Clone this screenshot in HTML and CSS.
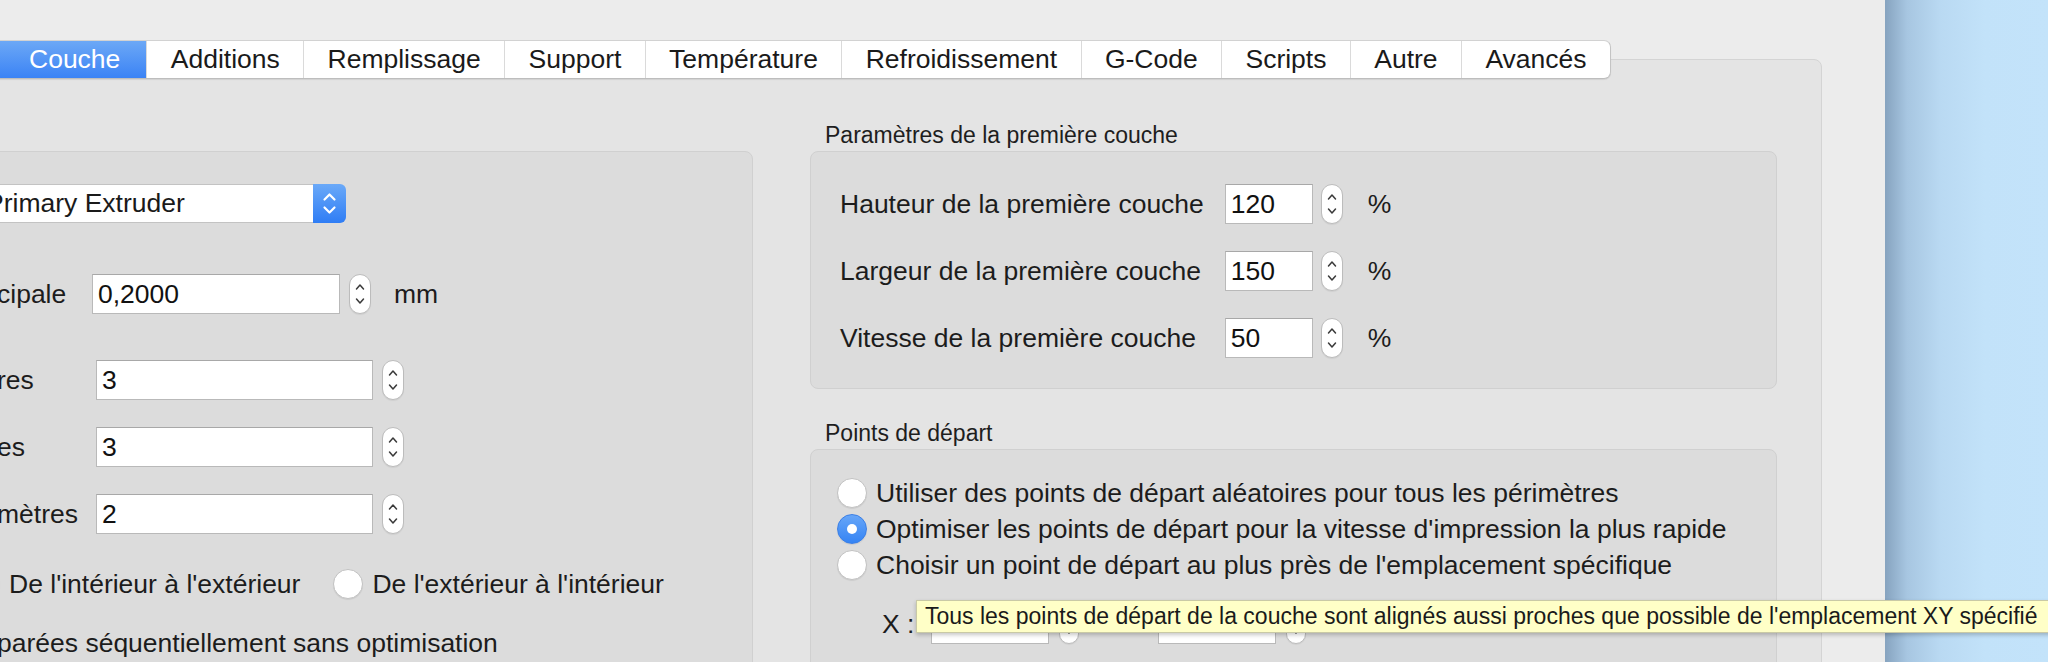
FILE: index.html
```html
<!DOCTYPE html>
<html lang="fr">
<head>
<meta charset="utf-8">
<title>Couche</title>
<link rel="stylesheet" href="styles.css">
</head>
<body>
<div class="screen">
  <div class="window">
    <nav class="tabs">
      <div class="tab active">Couche</div>
      <div class="tab">Additions</div>
      <div class="tab">Remplissage</div>
      <div class="tab">Support</div>
      <div class="tab">Température</div>
      <div class="tab">Refroidissement</div>
      <div class="tab">G-Code</div>
      <div class="tab">Scripts</div>
      <div class="tab">Autre</div>
      <div class="tab">Avancés</div>
    </nav>
    <div class="tabbox">
      <div class="col-left">
        <div class="groupbox groupbox--left">
          <div class="popup">
            <span class="popup-label">Primary Extruder</span>
            <span class="popup-arrows">
              <svg width="33" height="39" viewBox="0 0 33 39"><path d="M11.5 15.5 L16.5 10.5 L21.5 15.5 M11.5 23.5 L16.5 28.5 L21.5 23.5" fill="none" stroke="#fff" stroke-width="2.2" stroke-linecap="round" stroke-linejoin="round"/></svg>
            </span>
          </div>
          <div class="row-first">
            <span class="label label--first">cipale</span>
            <span class="input input--wide">0,2000</span>
            <span class="stepper"><svg width="20" height="38" viewBox="0 0 20 38"><path d="M6.5 14 L10 10 L13.5 14 M6.5 24 L10 28 L13.5 24" fill="none" stroke="#3a3a3a" stroke-width="1.5" stroke-linecap="round" stroke-linejoin="round"/></svg></span>
            <span class="unit unit--mm">mm</span>
          </div>
          <div class="fields">
            <span class="label">res</span>
            <span class="input input--long">3</span>
            <span class="stepper"><svg width="20" height="38" viewBox="0 0 20 38"><path d="M6.5 14 L10 10 L13.5 14 M6.5 24 L10 28 L13.5 24" fill="none" stroke="#3a3a3a" stroke-width="1.5" stroke-linecap="round" stroke-linejoin="round"/></svg></span>
            <span class="label">es</span>
            <span class="input input--long">3</span>
            <span class="stepper"><svg width="20" height="38" viewBox="0 0 20 38"><path d="M6.5 14 L10 10 L13.5 14 M6.5 24 L10 28 L13.5 24" fill="none" stroke="#3a3a3a" stroke-width="1.5" stroke-linecap="round" stroke-linejoin="round"/></svg></span>
            <span class="label">mètres</span>
            <span class="input input--long">2</span>
            <span class="stepper"><svg width="20" height="38" viewBox="0 0 20 38"><path d="M6.5 14 L10 10 L13.5 14 M6.5 24 L10 28 L13.5 24" fill="none" stroke="#3a3a3a" stroke-width="1.5" stroke-linecap="round" stroke-linejoin="round"/></svg></span>
          </div>
          <div class="radio-row">
            <span class="radio radio--hidden"></span>
            <span class="radio-text">De l'intérieur à l'extérieur</span>
            <span class="radio radio--spaced"></span>
            <span class="radio-text">De l'extérieur à l'intérieur</span>
          </div>
          <div class="check-row">parées séquentiellement sans optimisation</div>
        </div>
      </div>
      <div class="col-right">
        <div class="group-title">Paramètres de la première couche</div>
        <div class="groupbox groupbox--params">
          <div class="param-grid">
            <span class="param-label">Hauteur de la première couche</span>
            <span class="input input--short">120</span>
            <span class="stepper stepper--param"><svg width="20" height="38" viewBox="0 0 20 38"><path d="M6.5 14 L10 10 L13.5 14 M6.5 24 L10 28 L13.5 24" fill="none" stroke="#3a3a3a" stroke-width="1.5" stroke-linecap="round" stroke-linejoin="round"/></svg></span>
            <span class="unit unit--pct">%</span>
            <span class="param-label">Largeur de la première couche</span>
            <span class="input input--short">150</span>
            <span class="stepper stepper--param"><svg width="20" height="38" viewBox="0 0 20 38"><path d="M6.5 14 L10 10 L13.5 14 M6.5 24 L10 28 L13.5 24" fill="none" stroke="#3a3a3a" stroke-width="1.5" stroke-linecap="round" stroke-linejoin="round"/></svg></span>
            <span class="unit unit--pct">%</span>
            <span class="param-label">Vitesse de la première couche</span>
            <span class="input input--short">50</span>
            <span class="stepper stepper--param"><svg width="20" height="38" viewBox="0 0 20 38"><path d="M6.5 14 L10 10 L13.5 14 M6.5 24 L10 28 L13.5 24" fill="none" stroke="#3a3a3a" stroke-width="1.5" stroke-linecap="round" stroke-linejoin="round"/></svg></span>
            <span class="unit unit--pct">%</span>
          </div>
        </div>
        <div class="group-title group-title--second">Points de départ</div>
        <div class="groupbox groupbox--points">
          <div class="radio-list">
            <div class="radio-item"><span class="radio"></span><span class="radio-text">Utiliser des points de départ aléatoires pour tous les périmètres</span></div>
            <div class="radio-item"><span class="radio radio--on"></span><span class="radio-text">Optimiser les points de départ pour la vitesse d'impression la plus rapide</span></div>
            <div class="radio-item"><span class="radio"></span><span class="radio-text">Choisir un point de départ au plus près de l'emplacement spécifique</span></div>
          </div>
          <div class="xy-row">
            <span class="xy-label">X :</span>
            <span class="input input--xy"></span>
            <span class="stepper stepper--xy"><svg width="18" height="38" viewBox="0 0 18 38"><path d="M5.5 14 L9 10 L12.5 14 M5.5 24 L9 28 L12.5 24" fill="none" stroke="#3a3a3a" stroke-width="1.5" stroke-linecap="round" stroke-linejoin="round"/></svg></span>
            <span class="xy-gap"></span>
            <span class="input input--xy"></span>
            <span class="stepper stepper--xy"><svg width="18" height="38" viewBox="0 0 18 38"><path d="M5.5 14 L9 10 L12.5 14 M5.5 24 L9 28 L12.5 24" fill="none" stroke="#3a3a3a" stroke-width="1.5" stroke-linecap="round" stroke-linejoin="round"/></svg></span>
          </div>
          <div class="tooltip">Tous les points de départ de la couche sont alignés aussi proches que possible de l'emplacement XY spécifié</div>
        </div>
      </div>
    </div>
  </div>
  <div class="desktop"></div>
</div>
</body>
</html>
```

FILE: styles.css
```css
* { box-sizing: border-box; }

html, body {
  margin: 0;
  padding: 0;
}

body {
  width: 2048px;
  height: 662px;
  overflow: hidden;
  font-family: "Liberation Sans", Arial, sans-serif;
  font-size: 26.5px;
  color: #1c1c1c;
  background: #ececec;
}

.screen {
  display: flex;
  height: 662px;
}

.window {
  flex: none;
  width: 1885px;
  height: 662px;
  background: #ececec;
  padding-top: 40px;
  position: relative;
}

/* ---------- Tabs ---------- */
.tabs {
  display: flex;
  width: max-content;
  height: 39px;
  margin-left: -20px;
  margin-bottom: -20px;
  position: relative;
  z-index: 2;
  background: #fff;
  border-top: 1px solid #d2d2d2;
  border-bottom: 1px solid #bdbdbd;
  border-right: 1px solid #c4c4c4;
  border-radius: 0 7px 7px 0;
  box-shadow: 0 1px 1px rgba(0, 0, 0, 0.08);
}

.tab {
  padding: 0 23.4px;
  line-height: 37px;
  white-space: nowrap;
  color: #1a1a1a;
}

.tab + .tab {
  border-left: 1px solid #dadada;
}

.tab:first-child {
  padding-left: 49px;
  padding-right: 26px;
}

.tab.active {
  color: #fff;
  background: linear-gradient(#6ca8f6, #3b83f5);
}

.tab:last-child {
  border-radius: 0 7px 7px 0;
}

/* ---------- Tab content box ---------- */
.tabbox {
  width: 1922px;
  height: 720px;
  margin-left: -100px;
  padding: 60px 0 0 39px;
  display: flex;
  gap: 57px;
  background: #e4e4e4;
  border: 1px solid #d4d4d4;
  border-radius: 8px;
}

.col-left {
  flex: none;
  width: 813px;
  padding-top: 31px;
}

.col-right {
  flex: none;
  width: 967px;
}

.group-title {
  font-size: 23px;
  line-height: 31px;
  padding-left: 15px;
  color: #1e1e1e;
}

.group-title--second {
  margin-top: 29px;
}

.groupbox {
  background: #dcdcdc;
  border: 1px solid #d0d0d0;
  border-radius: 8px;
}

/* ---------- Left group ---------- */
.groupbox--left {
  height: 600px;
  padding: 32px 0 0 56px;
}

.popup {
  display: flex;
  width: 361px;
  height: 39px;
  margin-left: -12px;
}

.popup-label {
  flex: 1;
  background: #fff;
  border: 1px solid #c3c3c3;
  border-right: none;
  border-radius: 6px 0 0 6px;
  line-height: 37px;
  white-space: nowrap;
  color: #1a1a1a;
}

.popup-arrows {
  width: 33px;
  height: 39px;
  background: linear-gradient(#6aa9f8, #2f7df5);
  border-radius: 0 6px 6px 0;
  display: flex;
}

.row-first {
  display: flex;
  align-items: center;
  height: 40px;
  margin-top: 51px;
}

.label {
  white-space: nowrap;
  line-height: 40px;
}

.label--first {
  width: 95px;
}

.input {
  display: block;
  height: 40px;
  background: #fff;
  border: 1px solid #b9b9b9;
  border-top-color: #a8a8a8;
  padding-left: 5px;
  line-height: 38px;
  color: #111;
}

.input--wide { width: 248px; }
.input--long { width: 277px; }
.input--short { width: 88px; }
.input--xy { width: 118px; }

.stepper {
  display: flex;
  width: 22px;
  height: 40px;
  background: #fff;
  border: 1px solid #bcbcbc;
  border-radius: 11px;
  box-shadow: 0 1px 1px rgba(0, 0, 0, 0.06);
}

.row-first .stepper {
  margin-left: 9px;
}

.unit--mm {
  margin-left: 23px;
}

.fields {
  display: grid;
  grid-template-columns: 90px 277px 22px;
  grid-auto-rows: 40px;
  column-gap: 9px;
  row-gap: 27px;
  margin-top: 46px;
  align-items: center;
}

.radio-row {
  display: flex;
  align-items: center;
  height: 30px;
  margin-top: 35px;
}

.radio {
  flex: none;
  width: 30px;
  height: 30px;
  border-radius: 50%;
  background: #fff;
  border: 1px solid #c2c2c2;
  box-shadow: 0 1px 1px rgba(0, 0, 0, 0.08);
  margin-right: 9px;
  position: relative;
}

.radio--hidden {
  margin-left: -27px;
}

.radio--spaced {
  margin-left: 33px;
}

.radio--on {
  background: linear-gradient(#67a6f8, #3584f4);
  border-color: #3b7fe6;
}

.radio--on::after {
  content: "";
  position: absolute;
  left: 9px;
  top: 9px;
  width: 10px;
  height: 10px;
  border-radius: 50%;
  background: #fff;
}

.radio-text {
  white-space: nowrap;
  line-height: 30px;
}

.check-row {
  margin-top: 29px;
  line-height: 30px;
  white-space: nowrap;
}

/* ---------- Right groups ---------- */
.groupbox--params {
  height: 238px;
  padding: 32px 0 0 29px;
}

.param-grid {
  display: grid;
  grid-template-columns: max-content max-content max-content max-content;
  grid-auto-rows: 40px;
  row-gap: 27px;
  align-items: center;
}

.param-label {
  white-space: nowrap;
  margin-right: 21px;
}

.stepper--param {
  margin-left: 8px;
}

.unit--pct {
  margin-left: 25px;
}

.groupbox--points {
  position: relative;
  height: 400px;
  padding: 25px 0 0 26px;
}

.radio-item {
  display: flex;
  align-items: center;
  height: 36px;
}

.xy-row {
  display: flex;
  align-items: center;
  height: 40px;
  margin-top: 21px;
  padding-left: 45px;
}

.xy-label {
  white-space: nowrap;
}

.input--xy {
  margin-left: 17px;
}

.stepper--xy {
  width: 20px;
  margin-left: 10px;
}

.xy-gap {
  width: 62px;
}

.tooltip {
  position: absolute;
  left: 105px;
  top: 150px;
  z-index: 5;
  width: 1150px;
  height: 33px;
  padding-left: 8px;
  background: #ffffc7;
  border: 1px solid #c9c9a6;
  box-shadow: 0 2px 4px rgba(0, 0, 0, 0.22);
  font-size: 23px;
  line-height: 31px;
  white-space: nowrap;
  color: #1a1a1a;
}

/* ---------- Desktop ---------- */
.desktop {
  flex: 1;
  height: 662px;
  background: linear-gradient(to right, #86a3bf 0, #a7c6e1 22px, #b9d9f2 55px, #c2e2f9 100px, #c3e3fa 100%);
}
```
